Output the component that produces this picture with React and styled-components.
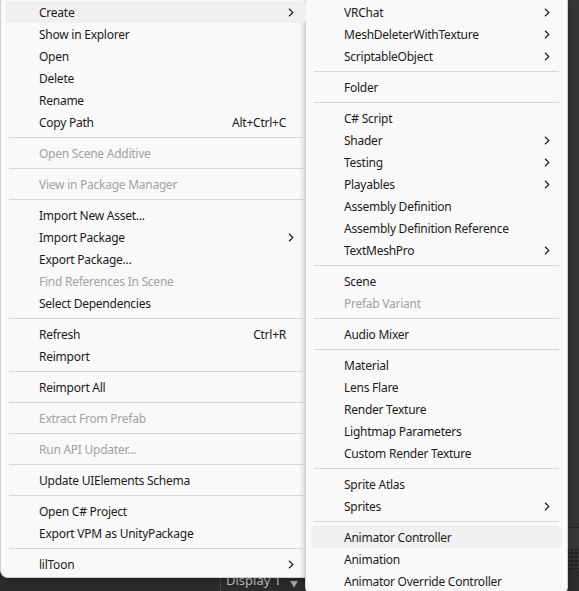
import React from "react";
import styled, { createGlobalStyle } from "styled-components";

const GlobalStyle = createGlobalStyle`
  html, body {
    margin: 0;
    padding: 0;
    height: 100%;
    overflow: hidden;
    background: #353535;
  }
  #root {
    height: 100%;
  }
`;

const Editor = styled.div`
  position: relative;
  height: 100vh;
  display: flex;
  flex-direction: column;
  font-family: "Noto Sans", "Noto Sans CJK KR", sans-serif;
`;

const Panel = styled.div`
  flex: 1;
  background: #353535;
  border-bottom: 1px solid #242424;
`;

const Strip = styled.div`
  height: 21px;
  background: #383838;
`;

const DottedStrip = styled.div`
  height: 22px;
  background-color: #262626;
  background-image: radial-gradient(#3a3a3a 0.8px, transparent 0.8px);
  background-size: 4px 4px;
`;

const Toolbar = styled.div`
  height: 20px;
  display: flex;
  align-items: flex-start;
  background: #2c2c2c;
`;

const DisplayDrop = styled.div`
  margin-left: 220px;
  width: 86px;
  height: 20px;
  display: flex;
  align-items: flex-start;
  justify-content: space-between;
  padding: 1px 8px 0 5px;
  box-sizing: border-box;
  border-left: 1px dotted #5a5a5a;
  color: #bcbcbc;
  font-size: 13px;
  line-height: 17px;
`;

const Caret = styled.span`
  font-size: 8px;
  color: #a8a8a8;
  margin-top: 3px;
`;

const MenuLayer = styled.div`
  position: absolute;
  top: 0;
  left: 0;
  display: flex;
  align-items: flex-start;
`;

const Menu = styled.div`
  width: ${(p) => p.$width}px;
  margin-left: ${(p) => p.$overlap || 0}px;
  box-sizing: border-box;
  background: #f9f9f9;
  border: 1px solid #cfcfcf;
  border-top: none;
  border-radius: 0 0 8px 8px;
  padding: 1px 5px 2px;
  box-shadow: 0 2px 6px rgba(0, 0, 0, 0.25);
  font-size: 12px;
  letter-spacing: -0.25px;
  color: #1b1b1b;
`;

const Item = styled.div`
  position: relative;
  height: 22px;
  display: flex;
  align-items: center;
  padding-left: 33px;
  padding-right: 20px;
  border-radius: 4px;
  background: ${(p) => (p.$active ? "#f0f0f0" : "transparent")};
  color: ${(p) => (p.$disabled ? "#a2a2a2" : "#1b1b1b")};
  white-space: nowrap;
`;

const Label = styled.span`
  flex: 1;
`;

const Shortcut = styled.span`
  color: #1b1b1b;
`;

const Arrow = styled.svg`
  position: absolute;
  right: 12px;
  top: 7px;
`;

const Separator = styled.div`
  height: 9px;
  display: flex;
  align-items: center;
  padding: 0 3px;

  &::after {
    content: "";
    flex: 1;
    height: 1px;
    background: #d6d6d6;
  }
`;

const SEP = "-";

const assetsMenu = [
  { label: "Create", sub: true, active: true },
  { label: "Show in Explorer" },
  { label: "Open" },
  { label: "Delete" },
  { label: "Rename" },
  { label: "Copy Path", shortcut: "Alt+Ctrl+C" },
  SEP,
  { label: "Open Scene Additive", disabled: true },
  SEP,
  { label: "View in Package Manager", disabled: true },
  SEP,
  { label: "Import New Asset..." },
  { label: "Import Package", sub: true },
  { label: "Export Package..." },
  { label: "Find References In Scene", disabled: true },
  { label: "Select Dependencies" },
  SEP,
  { label: "Refresh", shortcut: "Ctrl+R" },
  { label: "Reimport" },
  SEP,
  { label: "Reimport All" },
  SEP,
  { label: "Extract From Prefab", disabled: true },
  SEP,
  { label: "Run API Updater...", disabled: true },
  SEP,
  { label: "Update UIElements Schema" },
  SEP,
  { label: "Open C# Project" },
  { label: "Export VPM as UnityPackage" },
  SEP,
  { label: "lilToon", sub: true },
];

const createMenu = [
  { label: "VRChat", sub: true },
  { label: "MeshDeleterWithTexture", sub: true },
  { label: "ScriptableObject", sub: true },
  SEP,
  { label: "Folder" },
  SEP,
  { label: "C# Script" },
  { label: "Shader", sub: true },
  { label: "Testing", sub: true },
  { label: "Playables", sub: true },
  { label: "Assembly Definition" },
  { label: "Assembly Definition Reference" },
  { label: "TextMeshPro", sub: true },
  SEP,
  { label: "Scene" },
  { label: "Prefab Variant", disabled: true },
  SEP,
  { label: "Audio Mixer" },
  SEP,
  { label: "Material" },
  { label: "Lens Flare" },
  { label: "Render Texture" },
  { label: "Lightmap Parameters" },
  { label: "Custom Render Texture" },
  SEP,
  { label: "Sprite Atlas" },
  { label: "Sprites", sub: true },
  SEP,
  { label: "Animator Controller", active: true },
  { label: "Animation" },
  { label: "Animator Override Controller" },
];

function Chevron() {
  return (
    <Arrow width="6" height="9" viewBox="0 0 6 9">
      <path d="M1 0.8 L4.8 4.5 L1 8.2" fill="none" stroke="#222" strokeWidth="1.2" />
    </Arrow>
  );
}

function MenuList({ items, width, overlap }) {
  return (
    <Menu $width={width} $overlap={overlap}>
      {items.map((it, i) =>
        it === SEP ? (
          <Separator key={i} />
        ) : (
          <Item key={i} $active={it.active} $disabled={it.disabled}>
            <Label>{it.label}</Label>
            {it.shortcut && <Shortcut>{it.shortcut}</Shortcut>}
            {it.sub && <Chevron />}
          </Item>
        )
      )}
    </Menu>
  );
}

export default function App() {
  return (
    <>
      <GlobalStyle />
      <Editor>
        <Panel />
        <Strip />
        <DottedStrip />
        <Toolbar>
          <DisplayDrop>
            Display 1 <Caret>▼</Caret>
          </DisplayDrop>
        </Toolbar>
        <MenuLayer>
          <MenuList items={assetsMenu} width={312} />
          <MenuList items={createMenu} width={263} overlap={-7} />
        </MenuLayer>
      </Editor>
    </>
  );
}
